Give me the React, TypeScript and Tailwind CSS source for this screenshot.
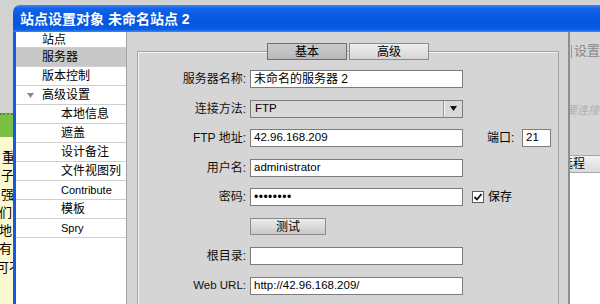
import React from "react";

const F = "font-['Liberation_Sans','Noto_Sans_CJK_SC',sans-serif]";

function SideItem({ label, indent, selected, h = "h-[19px]", arrow, latin }: { label: string; indent?: boolean; selected?: boolean; h?: string; arrow?: boolean; latin?: boolean }) {
  return (
    <div className={`${h} flex items-center border-b border-[#cfcfcf] leading-none ${latin ? "text-[11px]" : "text-[12px]"} ${selected ? "bg-[#c8c8c8]" : "bg-white"}`}>
      <div className="w-[26px] shrink-0 flex justify-center pl-[2px]">
        {arrow && (
          <svg width="7" height="5" viewBox="0 0 7 5">
            <path d="M0 0 L7 0 L3.5 5 Z" fill="#8a8a8a" />
          </svg>
        )}
      </div>
      <span className={indent ? "pl-[19px]" : ""}>{label}</span>
    </div>
  );
}

function TextBox({ value, w = "w-[213px]", password, latin }: { value: string; w?: string; password?: boolean; latin?: boolean }) {
  return (
    <div className={`${w} h-[18px] bg-white border border-[#7c7c7c] flex items-center pl-[3px] ${latin ? "text-[11.5px]" : "text-[12px]"} leading-none overflow-hidden whitespace-nowrap shrink-0`}>
      {password ? <span className="text-[12px] tracking-[0.5px]">••••••••</span> : value}
    </div>
  );
}

function Label({ text, latin }: { text: string; latin?: boolean }) {
  return <div className={`w-[109px] shrink-0 text-right pr-[1px] ${latin ? "text-[11.5px]" : "text-[12px]"} leading-none text-[#111]`}>{text}</div>;
}

export default function App() {
  return (
    <div className={`w-[600px] h-[304px] overflow-hidden flex bg-[#d2d2d2] text-black ${F}`}>
      {/* left background strip */}
      <div className="w-[13px] shrink-0 flex flex-col">
        <div className="h-[113px] bg-[#d2d2d2]" />
        <div className="h-[24px] bg-[#79c043] border-t-2 border-dotted border-[#4f8f25]" />
        <div className="flex-1 bg-[#fcf9d0] pt-[12px] text-[13px] leading-[18.3px] overflow-hidden whitespace-nowrap flex flex-col">
          <span className="pl-[2px]">重</span>
          <span className="pl-[1px]">子</span>
          <span className="pl-[1px]">强</span>
          <span className="-ml-[1px]">们</span>
          <span className="-ml-[1px]">地</span>
          <span className="-ml-[1px]">有</span>
          <span className="-ml-[4px]">可不</span>
        </div>
      </div>

      {/* window */}
      <div className="mt-[5px] flex-1 flex flex-col rounded-tl-[7px] overflow-hidden">
        <div className="h-[27px] shrink-0 flex items-center pl-[7px] bg-[linear-gradient(to_bottom,#3d86f4_0%,#1565ea_12%,#0a5be4_35%,#0555e0_70%,#0a5ce6_90%,#3a88f6_100%)] text-white font-bold text-[14px] leading-none whitespace-nowrap">
          站点设置对象 未命名站点 2
        </div>
        <div className="flex-1 flex border-l-[3px] border-l-[#1559e6] overflow-hidden">
          {/* sidebar */}
          <div className="w-[111px] shrink-0 bg-white border-r border-[#a2a2a2] flex flex-col">
            <SideItem label="站点" h="h-[16px]" />
            <SideItem label="服务器" selected />
            <SideItem label="版本控制" />
            <SideItem label="高级设置" arrow />
            <SideItem label="本地信息" indent />
            <SideItem label="遮盖" indent />
            <SideItem label="设计备注" indent />
            <SideItem label="文件视图列" indent />
            <SideItem label="Contribute" indent latin />
            <SideItem label="模板" indent />
            <SideItem label="Spry" indent latin />
          </div>

          {/* main panel */}
          <div className="w-[441px] shrink-0 bg-[#d5d5d5] pl-[10px] pr-[9px] pt-[11px] overflow-hidden">
            <div className="mt-[8px] h-[300px] border border-[#a4a4a4] shadow-[inset_1px_1px_0_#f4f4f4]">
              <div className="-mt-[9px] flex justify-center gap-[2px]">
                <div className="w-[80px] h-[17px] border border-[#6e6e6e] bg-[linear-gradient(to_bottom,#cbcbcb,#b8b8b8)] flex items-center justify-center text-[12px] leading-none">
                  基本
                </div>
                <div className="w-[80px] h-[17px] border border-[#8c8c8c] bg-[linear-gradient(to_bottom,#eeeeee,#d6d6d6)] flex items-center justify-center text-[12px] leading-none">
                  高级
                </div>
              </div>

              <div className="mt-[10px] flex flex-col gap-[11.5px]">
                <div className="h-[18px] flex items-center gap-[3px]">
                  <Label text="服务器名称:" />
                  <TextBox value="未命名的服务器 2" />
                </div>
                <div className="h-[18px] flex items-center gap-[3px]">
                  <Label text="连接方法:" />
                  <div className="w-[213px] h-[18px] border border-[#7c7c7c] bg-[#d9d9d9] flex items-center text-[11.5px] leading-none">
                    <span className="flex-1 pl-[4px]">FTP</span>
                    <div className="w-[19px] h-full border-l border-l-[#9a9a9a] shadow-[inset_1px_0_0_#f2f2f2] flex items-center justify-center">
                      <svg width="7" height="5" viewBox="0 0 7 5">
                        <path d="M0 0 L7 0 L3.5 5 Z" fill="#111" />
                      </svg>
                    </div>
                  </div>
                </div>
                <div className="h-[18px] flex items-center gap-[3px]">
                  <Label text="FTP 地址:" />
                  <TextBox value="42.96.168.209" latin />
                  <span className="ml-[21px] text-[12px] leading-none w-[32px]">端口:</span>
                  <TextBox value="21" w="w-[29px]" latin />
                </div>
                <div className="h-[18px] flex items-center gap-[3px]">
                  <Label text="用户名:" />
                  <TextBox value="administrator" latin />
                </div>
                <div className="h-[18px] flex items-center gap-[3px]">
                  <Label text="密码:" />
                  <TextBox value="" password />
                  <div className="ml-[6px] w-[12px] h-[12px] border border-[#5a5a5a] bg-white flex items-center justify-center">
                    <svg width="10" height="10" viewBox="0 0 10 10">
                      <path d="M1.5 5 L4 7.5 L8.5 2" stroke="#111" strokeWidth="1.8" fill="none" />
                    </svg>
                  </div>
                  <span className="text-[12px] leading-none ml-[1px]">保存</span>
                </div>
                <div className="h-[18px] flex items-center gap-[3px]">
                  <div className="w-[109px] shrink-0" />
                  <div className="w-[76px] h-[17px] border border-[#8a8a8a] bg-[linear-gradient(to_bottom,#ececec,#c9c9c9)] flex items-center justify-center text-[12px] leading-none">
                    测试
                  </div>
                </div>
                <div className="h-[18px] flex items-center gap-[3px]">
                  <Label text="根目录:" />
                  <TextBox value="" />
                </div>
                <div className="h-[18px] flex items-center gap-[3px]">
                  <Label text="Web URL:" latin />
                  <TextBox value="http://42.96.168.209/" latin />
                </div>
              </div>
            </div>
          </div>

          {/* right background panel */}
          <div className="flex-1 border-l-2 border-l-[#8e8e8e] bg-[#d5d5d5] flex flex-col overflow-hidden whitespace-nowrap">
            <div className="h-[40px] pt-[12px] flex items-start">
              <div className="w-[1px] h-[13px] bg-[#9a9a9a] ml-[1px] mt-[1px]" />
              <span className="ml-[2px] text-[13px] leading-none text-[#8a8a8a]">设置</span>
            </div>
            <div className="h-[83px] pt-[25px]">
              <span className="-ml-[4px] text-[11px] italic leading-none text-[#b0b0b0]">要连接</span>
            </div>
            <div className="h-[18px] border-y border-[#a6a6a6] bg-[linear-gradient(to_bottom,#f2f2f2,#dadada)] flex items-center text-[12px] leading-none">
              <span className="-ml-[9px]">远程</span>
            </div>
            <div className="flex-1 bg-white" />
          </div>
        </div>
      </div>
    </div>
  );
}
